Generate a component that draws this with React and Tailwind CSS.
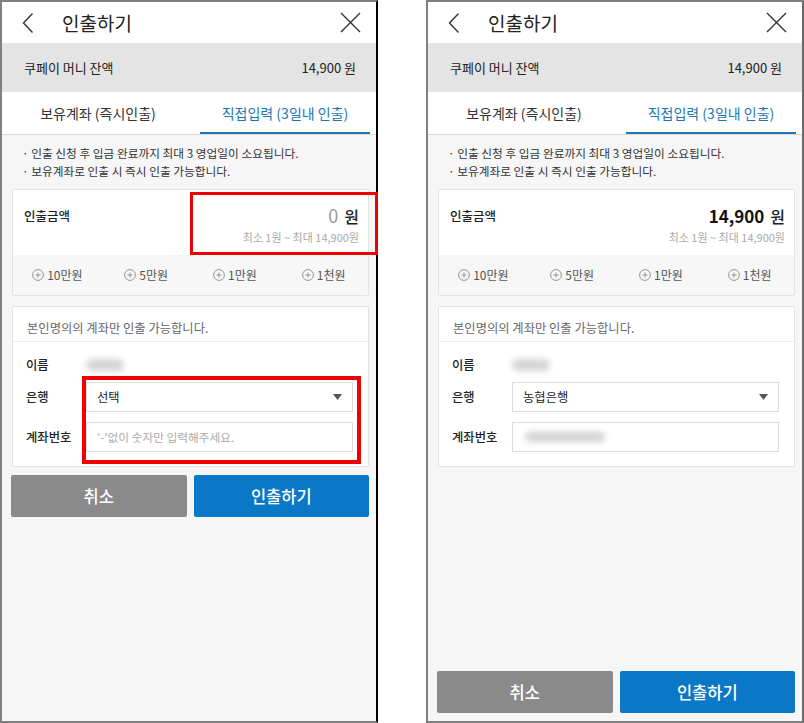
import React from "react";

const font = "font-['Noto_Sans_CJK_KR','Noto_Sans',sans-serif]";

function PlusCircle() {
  return (
    <svg width="12" height="12" viewBox="0 0 12 12" className="shrink-0">
      <circle cx="6" cy="6" r="5.4" fill="none" stroke="#8a8a8a" strokeWidth="0.9" />
      <path d="M6 3.4v5.2M3.4 6h5.2" stroke="#8a8a8a" strokeWidth="0.9" />
    </svg>
  );
}

function Header() {
  return (
    <div className="h-[41px] flex items-center bg-white pl-[20px] pr-[15px]">
      <svg width="12" height="22" viewBox="0 0 12 22">
        <path d="M10.5 1.5L1.5 11l9 9.5" fill="none" stroke="#333" strokeWidth="1.4" />
      </svg>
      <div className="ml-[28px] text-[19px] text-[#222] leading-none">인출하기</div>
      <svg width="21" height="21" viewBox="0 0 21 21" className="ml-auto">
        <path d="M1 1l19 19M20 1L1 20" stroke="#333" strokeWidth="1.4" />
      </svg>
    </div>
  );
}

function Field({ children, className = "" }) {
  return (
    <div className={"h-[30px] border border-[#dcdcdc] bg-white flex items-center px-[10px] " + className}>
      {children}
    </div>
  );
}

function Phone({ filled }) {
  return (
    <div
      className={
        "w-[378px] h-[723px] shrink-0 flex flex-col bg-[#f6f6f6] border-2 border-[#808080] " +
        (filled ? "border-r-[#6a6a6a]" : "border-r-black")
      }
    >
      <Header />

      <div className="h-[49px] bg-[#e4e4e4] flex items-center justify-between pl-[22px] pr-[20px] text-[13px] text-[#222]">
        <span>쿠페이 머니 잔액</span>
        <span>14,900 원</span>
      </div>

      <div className="h-[43px] bg-white border-b border-[#dadada] flex pl-[8px] text-[14px]">
        <div className="w-[176px] flex items-center justify-center text-[#333]">보유계좌 (즉시인출)</div>
        <div className="ml-[14px] w-[170px] flex items-center justify-center text-[#1b77b4] border-b-2 border-[#1b77b4] pt-[2px]">
          직접입력 (3일내 인출)
        </div>
      </div>

      <div className="pt-[9px] pb-[9px] pl-[20px] text-[11.7px] leading-[18px] text-[#333]">
        <div>· 인출 신청 후 입금 완료까지 최대 3 영업일이 소요됩니다.</div>
        <div>· 보유계좌로 인출 시 즉시 인출 가능합니다.</div>
      </div>

      <div className="relative ml-[10px] mr-[7px] border border-[#e3e3e3] rounded-[2px] overflow-visible">
        <div className="h-[65px] bg-white flex justify-between pl-[11px] pr-[9px]">
          <div className="pt-[17px] text-[12.5px] font-medium text-[#222] leading-[18px]">인출금액</div>
          <div className="flex flex-col items-end pt-[14px]">
            <div className={"leading-[23px] " + (filled ? "text-[17px] font-bold text-[#111]" : "text-[18px] text-[#999]")}>
              {filled ? "14,900" : "0"} <span className="text-[#222] text-[16px] font-medium ml-[2px]">원</span>
            </div>
            <div className="text-[11px] text-[#aaa] leading-[18px]">최소 1원 ~ 최대 14,900원</div>
          </div>
        </div>
        <div className="h-[40px] bg-[#f7f7f7] grid grid-cols-4 items-center text-[12px] text-[#555]">
          {["10만원", "5만원", "1만원", "1천원"].map((t) => (
            <div key={t} className="flex items-center justify-center gap-[3px]">
              <PlusCircle />
              <span>{t}</span>
            </div>
          ))}
        </div>
        {!filled && (
          <div className="absolute left-[177px] top-[2px] w-[188px] h-[63px] border-[3px] border-[#f00000]" />
        )}
      </div>

      <div className="relative mt-[10px] ml-[10px] mr-[7px] bg-white border border-[#e3e3e3] rounded-[2px]">
        <div className="h-[35px] border-b border-[#eeeeee] pl-[14px] pt-[12px] text-[12.3px] text-[#666] leading-[18px]">
          본인명의의 계좌만 인출 가능합니다.
        </div>
        <div className="pt-[13px] pb-[14px] pl-[13px] pr-[15px] text-[12.3px]">
          <div className="flex items-center h-[20px]">
            <span className="w-[60px] font-medium text-[#222]">이름</span>
            <span className="w-[38px] h-[12px] rounded-full bg-[#d4d4d4] blur-[3px]" />
          </div>
          <div className="flex items-center mt-[7px]">
            <span className="w-[60px] font-medium text-[#222]">은행</span>
            <Field className="flex-1 justify-between">
              <span className="text-[#222]">{filled ? "농협은행" : "선택"}</span>
              <svg width="9" height="6" viewBox="0 0 9 6">
                <path d="M0 0h9L4.5 6z" fill="#555" />
              </svg>
            </Field>
          </div>
          <div className="flex items-center mt-[10px]">
            <span className="w-[60px] font-medium text-[#222]">계좌번호</span>
            <Field className="flex-1">
              {filled ? (
                <span className="w-[80px] h-[10px] rounded-full bg-[#d2d2d2] blur-[3px] ml-[2px]" />
              ) : (
                <span className="text-[11.7px] text-[#aaa]">‘-’없이 숫자만 입력해주세요.</span>
              )}
            </Field>
          </div>
        </div>
        {!filled && (
          <div className="absolute left-[69px] top-[69px] w-[279px] h-[88px] border-[4px] border-[#f00000]" />
        )}
      </div>

      {filled && <div className="flex-1" />}

      <div className={"flex gap-[7px] ml-[9px] mr-[7px] " + (filled ? "mb-[8px]" : "mt-[8px]")}>
        <button className="flex-1 h-[42px] rounded-[2px] bg-[#8a8a8a] text-white text-[16.5px] font-medium">취소</button>
        <button className="flex-1 h-[42px] rounded-[2px] bg-[#0a78c6] text-white text-[16.5px] font-medium">인출하기</button>
      </div>
    </div>
  );
}

export default function App() {
  return (
    <div className={"w-[804px] h-[723px] bg-white flex gap-[48px] " + font}>
      <Phone filled={false} />
      <Phone filled={true} />
    </div>
  );
}
